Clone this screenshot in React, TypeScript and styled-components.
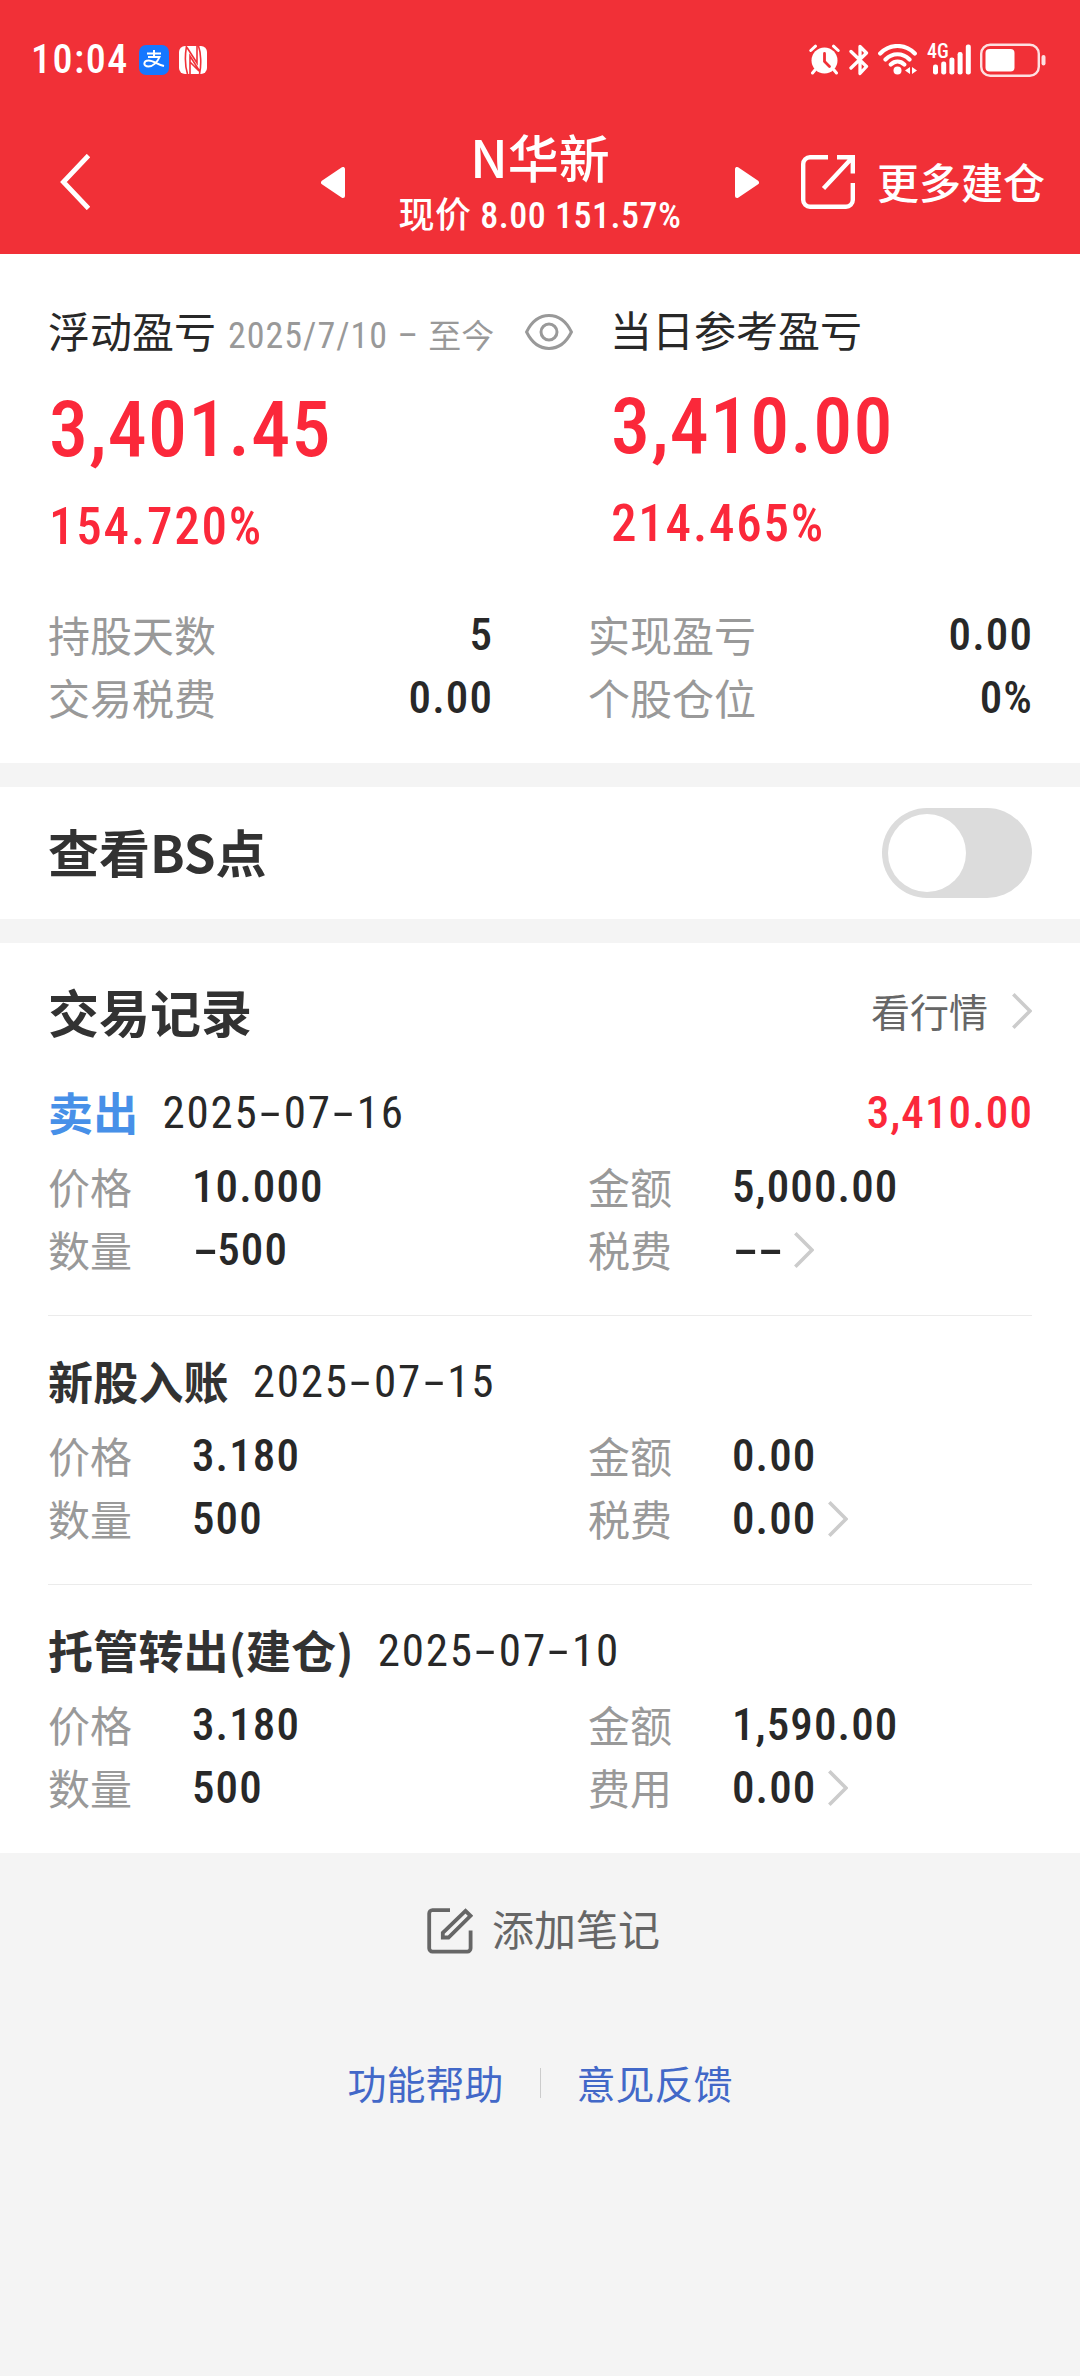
import React from "react";
import styled, { createGlobalStyle } from "styled-components";

const latin = `Roboto, "Noto Sans CJK SC", sans-serif`;
const cjk = `"Noto Sans CJK SC", Roboto, sans-serif`;

const GlobalStyle = createGlobalStyle`
  * { box-sizing: border-box; }
  body { margin: 0; background: #f4f4f4; font-family: ${latin}; }
  svg { display: block; flex: none; }
`;

const Page = styled.main`
  width: 1080px;
  min-height: 2376px;
  display: flex;
  flex-direction: column;
  background: #f4f4f4;
  color: #282828;
  white-space: nowrap;
`;

/* ---------- text ---------- */

const Num = styled.span<{ $size?: number; $track?: number; $color?: string; $weight?: number }>`
  font-family: ${latin};
  font-size: ${(p) => p.$size ?? 45}px;
  font-stretch: 75%;
  letter-spacing: ${(p) => p.$track ?? 1.1}px;
  font-weight: ${(p) => p.$weight ?? 500};
  color: ${(p) => p.$color ?? "#282828"};
`;

const Dash = styled.span`
  display: inline-block;
  width: 12.4px;
  margin: 0 7.2px 0 5.6px;
  letter-spacing: 0;
  text-align: center;
  transform: scaleX(1.9);
`;

const Label = styled.span<{ $color?: string; $size?: number; $weight?: number }>`
  font-family: ${cjk};
  font-size: ${(p) => p.$size ?? 42}px;
  font-weight: ${(p) => p.$weight ?? 400};
  color: ${(p) => p.$color ?? "#999"};
  padding-bottom: 2px;
`;

const Heading = styled.h2`
  margin: 0;
  padding-bottom: 4px;
  font-family: ${cjk};
  font-size: 51px;
  line-height: 60px;
  font-weight: 700;
  color: #323232;
`;

/* ---------- header ---------- */

const Header = styled.header`
  height: 254px;
  background: #f13037;
  color: #fff;
`;

const StatusBar = styled.div`
  height: 119px;
  padding: 0 34px 0 31px;
  display: flex;
  align-items: center;
  justify-content: space-between;
`;

const StatusGroup = styled.div<{ $gap: number }>`
  display: flex;
  align-items: center;
  gap: ${(p) => p.$gap}px;
`;

const Alipay = styled.span`
  width: 30px;
  height: 30px;
  border-radius: 7px;
  background: #1677ff;
  display: grid;
  place-items: center;
`;

const NavBar = styled.nav`
  height: 126px;
  padding-left: 60px;
  display: flex;
  align-items: center;
`;

const TitleGroup = styled.div`
  margin-left: 231px;
  width: 438px;
  display: flex;
  align-items: center;
  justify-content: space-between;
`;

const TitleBlock = styled.div`
  display: flex;
  flex-direction: column;
  align-items: center;
  gap: 8px;
`;

const Title = styled.h1`
  margin: 0;
  font: 500 51px/60px ${cjk};
`;

const Subtitle = styled.div`
  font: 500 36px/44px ${latin};
  font-stretch: 75%;
  letter-spacing: 0.5px;
`;

const More = styled.div`
  margin-left: 42px;
  display: flex;
  align-items: center;
  gap: 22px;
  font: 500 42px/56px ${latin};
`;

const MoreText = styled.span`
  padding-top: 5px;
`;

/* ---------- panels ---------- */

const Panel = styled.section`
  background: #fff;
  padding: 0 48px;
`;

const SummaryPanel = styled(Panel)`
  height: 509px;
`;

const Totals = styled.div`
  display: grid;
  grid-template-columns: 562px 1fr;
`;

const Total = styled.div<{ $top: number; $gap: number }>`
  display: flex;
  flex-direction: column;
  padding-top: ${(p) => p.$top}px;

  > :nth-child(2) { line-height: 90px; margin-top: ${(p) => p.$gap}px; margin-left: 1px; }
  > :nth-child(3) { line-height: 60px; margin-top: 22px; margin-left: 1px; }
`;

const TotalHead = styled.div`
  height: 60px;
  line-height: 60px;
  font-size: 42px;
  display: flex;
  align-items: baseline;
`;

const Period = styled.span`
  margin-left: 12px;
  font-size: 36px;
  font-stretch: 75%;
  letter-spacing: 1px;
  color: #999;
`;

const Today = styled.span`
  font-size: 33px;
  letter-spacing: 0;
`;

const EyeWrap = styled.span`
  align-self: center;
  margin-left: auto;
  margin-right: 37px;
  padding-bottom: 4px;
`;

const Columns = styled.div<{ $top: number }>`
  margin-top: ${(p) => p.$top}px;
  display: grid;
  grid-template-columns: 444px 444px;
  column-gap: 96px;
`;

const StatRow = styled.div`
  height: 63px;
  line-height: 63px;
  display: flex;
  align-items: center;
  justify-content: space-between;

  > ${Num} { margin-right: -1px; }
`;

const FieldRow = styled(StatRow)`
  justify-content: flex-start;

  > ${Label} { width: 144px; }
  > svg { margin-left: 13px; }
`;

const TogglePanel = styled(Panel)`
  margin: 24px 0;
  height: 132px;
  display: flex;
  align-items: center;
  justify-content: space-between;
`;

const Toggle = styled.button`
  width: 150px;
  height: 90px;
  padding: 6px;
  border: 0;
  border-radius: 45px;
  background: #dcdcdc;
  display: flex;
`;

const Knob = styled.span`
  width: 78px;
  height: 78px;
  border-radius: 50%;
  background: #fff;
`;

const RecordsPanel = styled(Panel)`
  padding-top: 38px;
  height: 910px;
`;

const RecordsHead = styled.div`
  height: 60px;
  margin-bottom: 42px;
  display: flex;
  align-items: center;
  justify-content: space-between;

  > ${Heading} { padding-bottom: 0; }
`;

const QuoteLink = styled.div`
  display: flex;
  align-items: center;
  gap: 24px;
`;

const Record = styled.article`
  padding-bottom: 34px;

  & + & {
    border-top: 1px solid #ebebeb;
    padding-top: 36px;
  }
`;

const RecordHead = styled.div`
  height: 60px;
  line-height: 60px;
  display: flex;
  align-items: center;
  gap: 24px;

  > :nth-child(3) { margin-left: auto; margin-right: -1px; }
`;

const Kind = styled.span<{ $color?: string }>`
  font: 700 45px/60px ${cjk};
  letter-spacing: 0.2px;
  color: ${(p) => p.$color ?? "#323232"};
  padding-bottom: 2px;
`;

/* ---------- footer ---------- */

const AddNote = styled.div`
  margin-top: 48px;
  padding-left: 7px;
  height: 60px;
  display: flex;
  align-items: center;
  justify-content: center;
  gap: 19px;
  line-height: 56px;

  > ${Label} { padding-bottom: 6px; }
`;

const Links = styled.footer`
  margin-top: 92px;
  height: 60px;
  display: flex;
  align-items: center;
  justify-content: center;
  line-height: 60px;
`;

const LinkDivider = styled.i`
  width: 1px;
  height: 30px;
  margin: 0 36px;
  background: #ccc;
`;

/* ---------- icons ---------- */

const Chevron = () => (
  <svg width="20" height="36" viewBox="0 0 20 36" fill="none" stroke="#ccc" strokeWidth="3.6">
    <path d="M1.3 1.3 18 18 1.3 34.7" />
  </svg>
);

const BackIcon = () => (
  <svg width="30" height="56" viewBox="0 0 30 56" fill="none" stroke="#fff" strokeWidth="4.8">
    <path d="M28.5 1.5 3.4 28l25.1 26.5" />
  </svg>
);

const Triangle = ({ flip }: { flip?: boolean }) => (
  <svg width="24" height="31" viewBox="0 0 24 31" fill="#fff" stroke="#fff" strokeWidth="4" strokeLinejoin="round">
    <path d={flip ? "M2 2v27L22 15.5Z" : "M22 2v27L2 15.5Z"} />
  </svg>
);

const ShareIcon = () => (
  <svg width="54" height="56" viewBox="0 0 54 56" fill="none" stroke="#fff" strokeWidth="4.4">
    <path d="M27 3.2H9a6.8 6.8 0 0 0-6.8 6.8v36A6.8 6.8 0 0 0 9 52.8h36A6.8 6.8 0 0 0 51.8 46V29" />
    <path d="M36 3.2h15.8V19.5M51 4 22.5 34.5" />
  </svg>
);

const EyeIcon = () => (
  <svg width="48" height="36" viewBox="0 0 48 36" fill="none" stroke="#999" strokeWidth="3">
    <path d="M1.6 18C7 7 15 1.6 24 1.6S41 7 46.4 18C41 29 33 34.4 24 34.4S7 29 1.6 18Z" />
    <circle cx="24" cy="18" r="8" />
  </svg>
);

const NoteIcon = () => (
  <svg width="46" height="46" viewBox="0 0 46 46" fill="none" stroke="#666" strokeWidth="3.8">
    <path d="M23 2.2H5.5A3.3 3.3 0 0 0 2.2 5.5v34.8a3.3 3.3 0 0 0 3.3 3.3h34.8a3.3 3.3 0 0 0 3.3-3.3V22.5" />
    <path d="M38.5 2.8 43.5 7.8 21.5 29.5H15.8V24.8Z" />
  </svg>
);

const AlipayIcon = () => (
  <svg width="24" height="22" viewBox="0 0 24 22" fill="none" stroke="#fff" strokeWidth="2">
    <path d="M5 4.5h14M12 1v7M6 8h11.5c-2 5-6.5 9.5-11 9.5-6 0-5-6 0-6 5 0 9 4 15.5 5.5" />
  </svg>
);

const NfcIcon = () => (
  <svg width="28" height="28" viewBox="0 0 28 28">
    <rect width="28" height="28" rx="6" fill="#fff" />
    <path
      d="M7.5 0C6 9 6 20 8.5 28M20.5 28C22.5 19 22 7 19.5 0M11 28V10L20.5 25M8 1.5 18 17V0M11 16l9 9"
      fill="none"
      stroke="#f13037"
      strokeWidth="1.6"
    />
  </svg>
);

const AlarmIcon = () => (
  <svg width="31" height="31" viewBox="0 0 31 31" fill="none" stroke="#fff" strokeWidth="3" strokeLinecap="round">
    <circle cx="15.5" cy="16.5" r="13" fill="#fff" stroke="none" />
    <path d="M1.8 6.5 6.5 2.2M29.2 6.5 24.5 2.2M6 26l-2.5 3M25 26l2.5 3" />
    <path d="M15.5 9.5v8l5 5" stroke="#f13037" strokeWidth="2.8" />
  </svg>
);

const BluetoothIcon = () => (
  <svg width="20" height="32" viewBox="0 0 20 32" fill="none" stroke="#fff" strokeWidth="3.3" strokeLinejoin="round" strokeLinecap="round">
    <path d="M2 7.5 17.5 22.5 11 29.5V2.5L17.5 9 2 24" />
  </svg>
);

const WifiIcon = () => (
  <svg width="40" height="31" viewBox="0 0 40 31" fill="none" stroke="#fff" strokeWidth="4.2" strokeLinecap="round">
    <path d="M2.2 9.5C12-.5 27-.5 36.8 9.5M7.5 15.5c7-7 17-7 24 0M12.8 20.5c4-3.8 9.5-3.8 13.5 0" />
    <circle cx="19.5" cy="26.5" r="4" fill="#fff" stroke="none" />
    <path d="M32 23v7l-5-3.5ZM34 23v7l5-3.5Z" fill="#fff" stroke="none" />
  </svg>
);

const SignalWrap = styled.span`
  position: relative;
  width: 44px;
  height: 31px;

  > svg { margin-left: 6px; }
`;

const SignalTag = styled.span`
  position: absolute;
  left: 0;
  top: 0;
  font: 500 20px/15px ${latin};
  font-stretch: 75%;
`;

const SignalIcon = () => (
  <SignalWrap>
    <SignalTag>4G</SignalTag>
    <svg width="38" height="31" viewBox="0 0 38 31" fill="#fff">
      {[20.5, 17.5, 13.5, 8, 0.5].map((top, i) => (
        <rect key={top} x={i * 8.2} y={top} width="5" height={30.5 - top} rx="2.2" />
      ))}
    </svg>
  </SignalWrap>
);

const BatteryIcon = () => (
  <svg width="66" height="34" viewBox="0 0 66 34" fill="#fff">
    <rect x="1.2" y="1.7" width="57.6" height="31" rx="9" fill="none" stroke="#fff" strokeOpacity=".85" strokeWidth="2.4" />
    <rect x="5.5" y="6" width="29" height="22.5" rx="4" />
    <rect x="61.5" y="12" width="4" height="10.5" rx="2" opacity=".85" />
  </svg>
);

/* ---------- data ---------- */

const stats = [
  [["持股天数", "5"], ["交易税费", "0.00"]],
  [["实现盈亏", "0.00"], ["个股仓位", "0%"]],
];

const records = [
  {
    kind: "卖出", color: "#4790e8", date: "2025-07-16", profit: "3,410.00",
    fields: [[["价格", "10.000"], ["数量", "-500"]], [["金额", "5,000.00"], ["税费", "--"]]],
  },
  {
    kind: "新股入账", date: "2025-07-15",
    fields: [[["价格", "3.180"], ["数量", "500"]], [["金额", "0.00"], ["税费", "0.00"]]],
  },
  {
    kind: "托管转出(建仓)", date: "2025-07-10",
    fields: [[["价格", "3.180"], ["数量", "500"]], [["金额", "1,590.00"], ["费用", "0.00"]]],
  },
];

const RED = "#fb283a";

const dashed = (text: string) =>
  text.split("").map((c, i) => (c === "-" ? <Dash key={i}>-</Dash> : c));

export default function App() {
  return (
    <Page>
      <GlobalStyle />
      <Header>
        <StatusBar>
          <StatusGroup $gap={10}>
            <Num $size={40} $track={1.5} $color="#fff">10:04</Num>
            <Alipay><AlipayIcon /></Alipay>
            <NfcIcon />
          </StatusGroup>
          <StatusGroup $gap={9}>
            <AlarmIcon />
            <BluetoothIcon />
            <WifiIcon />
            <SignalIcon />
            <BatteryIcon />
          </StatusGroup>
        </StatusBar>
        <NavBar>
          <BackIcon />
          <TitleGroup>
            <Triangle />
            <TitleBlock>
              <Title>N华新</Title>
              <Subtitle>现价 8.00 151.57%</Subtitle>
            </TitleBlock>
            <Triangle flip />
          </TitleGroup>
          <More>
            <ShareIcon />
            <MoreText>更多建仓</MoreText>
          </More>
        </NavBar>
      </Header>

      <SummaryPanel>
        <Totals>
          <Total $top={50} $gap={21}>
            <TotalHead>
              浮动盈亏
              <Period>2025/7/10 – <Today>至今</Today></Period>
              <EyeWrap><EyeIcon /></EyeWrap>
            </TotalHead>
            <Num $size={78} $track={1.2} $color={RED}>3,401.45</Num>
            <Num $size={51} $track={1.8} $color={RED}>154.720%</Num>
          </Total>
          <Total $top={49} $gap={19}>
            <TotalHead>当日参考盈亏</TotalHead>
            <Num $size={78} $track={1.2} $color={RED}>3,410.00</Num>
            <Num $size={51} $track={1.8} $color={RED}>214.465%</Num>
          </Total>
        </Totals>
        <Columns $top={46}>
          {stats.map((col, i) => (
            <div key={i}>
              {col.map(([label, value]) => (
                <StatRow key={label}>
                  <Label>{label}</Label>
                  <Num>{value}</Num>
                </StatRow>
              ))}
            </div>
          ))}
        </Columns>
      </SummaryPanel>

      <TogglePanel>
        <Heading>查看BS点</Heading>
        <Toggle aria-label="查看BS点"><Knob /></Toggle>
      </TogglePanel>

      <RecordsPanel>
        <RecordsHead>
          <Heading>交易记录</Heading>
          <QuoteLink>
            <Label $size={39} $color="#666">看行情</Label>
            <Chevron />
          </QuoteLink>
        </RecordsHead>
        {records.map((r) => (
          <Record key={r.date}>
            <RecordHead>
              <Kind $color={r.color}>{r.kind}</Kind>
              <Num $weight={400} $track={1.8}>{dashed(r.date)}</Num>
              {r.profit && <Num $color={RED}>{r.profit}</Num>}
            </RecordHead>
            <Columns $top={12}>
              {r.fields.map((col, i) => (
                <div key={i}>
                  {col.map(([label, value], j) => (
                    <FieldRow key={label}>
                      <Label>{label}</Label>
                      <Num>{dashed(value)}</Num>
                      {i === 1 && j === 1 && <Chevron />}
                    </FieldRow>
                  ))}
                </div>
              ))}
            </Columns>
          </Record>
        ))}
      </RecordsPanel>

      <AddNote>
        <NoteIcon />
        <Label $color="#666">添加笔记</Label>
      </AddNote>
      <Links>
        <Label $size={39} $color="#4268c8">功能帮助</Label>
        <LinkDivider />
        <Label $size={39} $color="#4268c8">意见反馈</Label>
      </Links>
    </Page>
  );
}
